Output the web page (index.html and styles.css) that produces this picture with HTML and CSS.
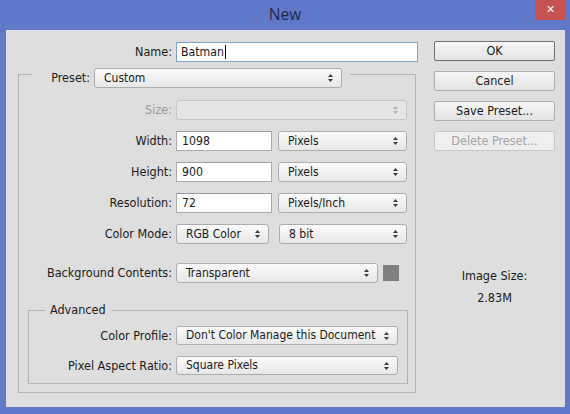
FILE: index.html
```html
<!DOCTYPE html>
<html>
<head>
<meta charset="utf-8">
<link rel="stylesheet" href="styles.css">
</head>
<body>
<div class="window">
  <div class="titlebar">
    <span></span>
    <span class="title">New</span>
    <div class="close">&#x2715;</div>
  </div>
  <div class="client">
    <div class="main">
      <div class="name-row">
        <span class="lbl">Name:</span>
        <div class="field name">Batman<span class="caret"></span></div>
      </div>
      <fieldset class="group">
        <legend class="preset">
          <span class="plabel">Preset:</span>
          <div class="select preset-sel"><span>Custom</span><svg class="arr" width="5" height="8" viewBox="0 0 5 8"><path d="M2.5 0L5 3H0Z M0 5H5L2.5 8Z"/></svg></div>
        </legend>
        <div class="rows">
          <span class="lbl dis">Size:</span>
          <div class="ctl"><div class="select w-size dis"><span></span><svg class="arr" width="5" height="8" viewBox="0 0 5 8"><path d="M2.5 0L5 3H0Z M0 5H5L2.5 8Z"/></svg></div></div>

          <span class="lbl">Width:</span>
          <div class="ctl"><div class="field w-num">1098</div><div class="select w-unit"><span>Pixels</span><svg class="arr" width="5" height="8" viewBox="0 0 5 8"><path d="M2.5 0L5 3H0Z M0 5H5L2.5 8Z"/></svg></div></div>

          <span class="lbl">Height:</span>
          <div class="ctl"><div class="field w-num">900</div><div class="select w-unit"><span>Pixels</span><svg class="arr" width="5" height="8" viewBox="0 0 5 8"><path d="M2.5 0L5 3H0Z M0 5H5L2.5 8Z"/></svg></div></div>

          <span class="lbl">Resolution:</span>
          <div class="ctl"><div class="field w-num">72</div><div class="select w-unit"><span>Pixels/Inch</span><svg class="arr" width="5" height="8" viewBox="0 0 5 8"><path d="M2.5 0L5 3H0Z M0 5H5L2.5 8Z"/></svg></div></div>

          <span class="lbl">Color Mode:</span>
          <div class="ctl"><div class="select w-mode"><span>RGB Color</span><svg class="arr" width="5" height="8" viewBox="0 0 5 8"><path d="M2.5 0L5 3H0Z M0 5H5L2.5 8Z"/></svg></div><div class="select w-bit"><span>8 bit</span><svg class="arr" width="5" height="8" viewBox="0 0 5 8"><path d="M2.5 0L5 3H0Z M0 5H5L2.5 8Z"/></svg></div></div>

          <span class="lbl bg-gap">Background Contents:</span>
          <div class="ctl bg-gap"><div class="select w-bg"><span>Transparent</span><svg class="arr" width="5" height="8" viewBox="0 0 5 8"><path d="M2.5 0L5 3H0Z M0 5H5L2.5 8Z"/></svg></div><div class="swatch"></div></div>
        </div>

        <fieldset class="adv">
          <legend class="adv-legend">Advanced</legend>
          <div class="rows adv-rows">
            <span class="lbl">Color Profile:</span>
            <div class="ctl"><div class="select w-adv"><span>Don't Color Manage this Document</span><svg class="arr" width="5" height="8" viewBox="0 0 5 8"><path d="M2.5 0L5 3H0Z M0 5H5L2.5 8Z"/></svg></div></div>

            <span class="lbl">Pixel Aspect Ratio:</span>
            <div class="ctl"><div class="select w-adv"><span>Square Pixels</span><svg class="arr" width="5" height="8" viewBox="0 0 5 8"><path d="M2.5 0L5 3H0Z M0 5H5L2.5 8Z"/></svg></div></div>
          </div>
        </fieldset>
      </fieldset>
    </div>
    <div class="side">
      <div class="btn default">OK</div>
      <div class="btn">Cancel</div>
      <div class="btn">Save Preset...</div>
      <div class="btn dis">Delete Preset...</div>
      <div class="info">
        <div class="info-line">Image Size:</div>
        <div class="info-line">2.83M</div>
      </div>
    </div>
  </div>
</div>
</body>
</html>
```
FILE: styles.css
```css
html, body {
  margin: 0;
  padding: 0;
}
body {
  background: #5f78c8;
  width: 570px;
  height: 414px;
  overflow: hidden;
  font-family: "DejaVu Sans Condensed", "DejaVu Sans", sans-serif;
  font-size: 12.5px;
  color: #1a1a1a;
}
.titlebar {
  height: 30px;
  display: grid;
  grid-template-columns: 1fr auto 1fr;
  align-items: start;
}
.title {
  font-family: "Open Sans", "Noto Sans", sans-serif;
  font-size: 15.5px;
  line-height: 28px;
  color: #1e2a4d;
}
.close {
  justify-self: end;
  margin-right: 4px;
  width: 31px;
  height: 20px;
  background: #c75050;
  color: #fff;
  font-family: "DejaVu Sans", sans-serif;
  font-size: 11px;
  font-weight: bold;
  line-height: 20px;
  text-align: center;
}
.client {
  margin: 0 5px 0 6px;
  height: 377px;
  background: #dedede;
  display: flex;
  align-items: flex-start;
}
.main {
  width: 412px;
  padding-top: 12px;
}
.name-row {
  display: flex;
  align-items: center;
  gap: 4px;
}
.lbl {
  line-height: 20px;
  text-align: right;
  white-space: nowrap;
}
.name-row .lbl {
  width: 166px;
}
.lbl.dis {
  color: #9a9a9a;
}
.field {
  box-sizing: border-box;
  height: 20px;
  background: #fff;
  border: 1px solid #ababab;
  border-top-color: #9c9c9c;
  padding: 0 5px;
  line-height: 18px;
  white-space: nowrap;
  font-size: 12.2px;
}
.field.name {
  width: 242px;
  border-color: #7fa3cf;
  padding-left: 4px;
}
.caret {
  display: inline-block;
  width: 1px;
  height: 14px;
  background: #000;
  vertical-align: -3px;
  margin-left: 1px;
}
.group {
  margin: -2px 0 0 12px;
  padding: 0 0 8px 0;
  width: 398px;
  box-sizing: border-box;
  border: 1px solid #b4b4b4;
  min-inline-size: 0;
}
.preset {
  margin-left: 13px;
  padding: 8px 8px 0 17px;
  display: flex;
  align-items: center;
  gap: 4px;
}
.plabel {
  width: 41px;
  text-align: right;
  line-height: 20px;
}
.select {
  box-sizing: border-box;
  height: 20px;
  border: 1px solid #acacac;
  border-radius: 3px;
  background: linear-gradient(#fbfbfb, #e7e7e7);
  display: flex;
  align-items: center;
  justify-content: space-between;
  padding: 0 8px 0 9px;
  white-space: nowrap;
  line-height: 18px;
  font-size: 12px;
}
.arr {
  fill: #3a3a3a;
  flex: none;
}
.select.dis {
  background: #e6e6e6;
  border-color: #c6c6c6;
}
.select.dis .arr {
  fill: #b0b0b0;
}
.preset-sel { width: 248px; }
.w-size { width: 231px; }
.w-num { width: 96px; }
.w-unit { width: 129px; }
.w-mode { width: 93px; }
.w-bit { width: 128px; margin-left: 4px; }
.w-bg { width: 202px; }
.w-adv { width: 222px; }
.rows {
  display: grid;
  grid-template-columns: 153px auto;
  column-gap: 4px;
  row-gap: 11px;
  margin-top: 12px;
}
.ctl {
  display: flex;
  align-items: center;
  gap: 6px;
  height: 20px;
}
.bg-gap {
  margin-top: 8px;
}
.swatch {
  width: 16px;
  height: 16px;
  background: #808080;
  margin-left: -1px;
}
.adv {
  margin: 19px 7px 0 9px;
  padding: 0 0 8px 0;
  border: 1px solid #b4b4b4;
  min-inline-size: 0;
}
.adv-legend {
  margin-left: 16px;
  padding: 0 5px;
  line-height: 16px;
}
.adv-rows {
  grid-template-columns: 143px auto;
  margin-top: 8px;
}
.adv-rows .ctl,
.adv-rows .lbl,
.adv-rows .select {
  height: 19px;
  line-height: 19px;
}
.adv-rows .select {
  line-height: 17px;
}
.side {
  margin-left: 16px;
  width: 121px;
  padding-top: 11px;
  display: flex;
  flex-direction: column;
  gap: 10px;
}
.btn {
  box-sizing: border-box;
  height: 20px;
  border: 1px solid #acacac;
  border-radius: 2px;
  background: linear-gradient(#f6f6f6, #e3e3e3);
  text-align: center;
  line-height: 18px;
}
.btn.default {
  border-color: #707070;
}
.btn.dis {
  background: #efefef;
  border-color: #c8c8c8;
  color: #a3a3a3;
}
.info {
  margin-top: 104px;
  text-align: center;
}
.info-line {
  line-height: 22px;
}
```
